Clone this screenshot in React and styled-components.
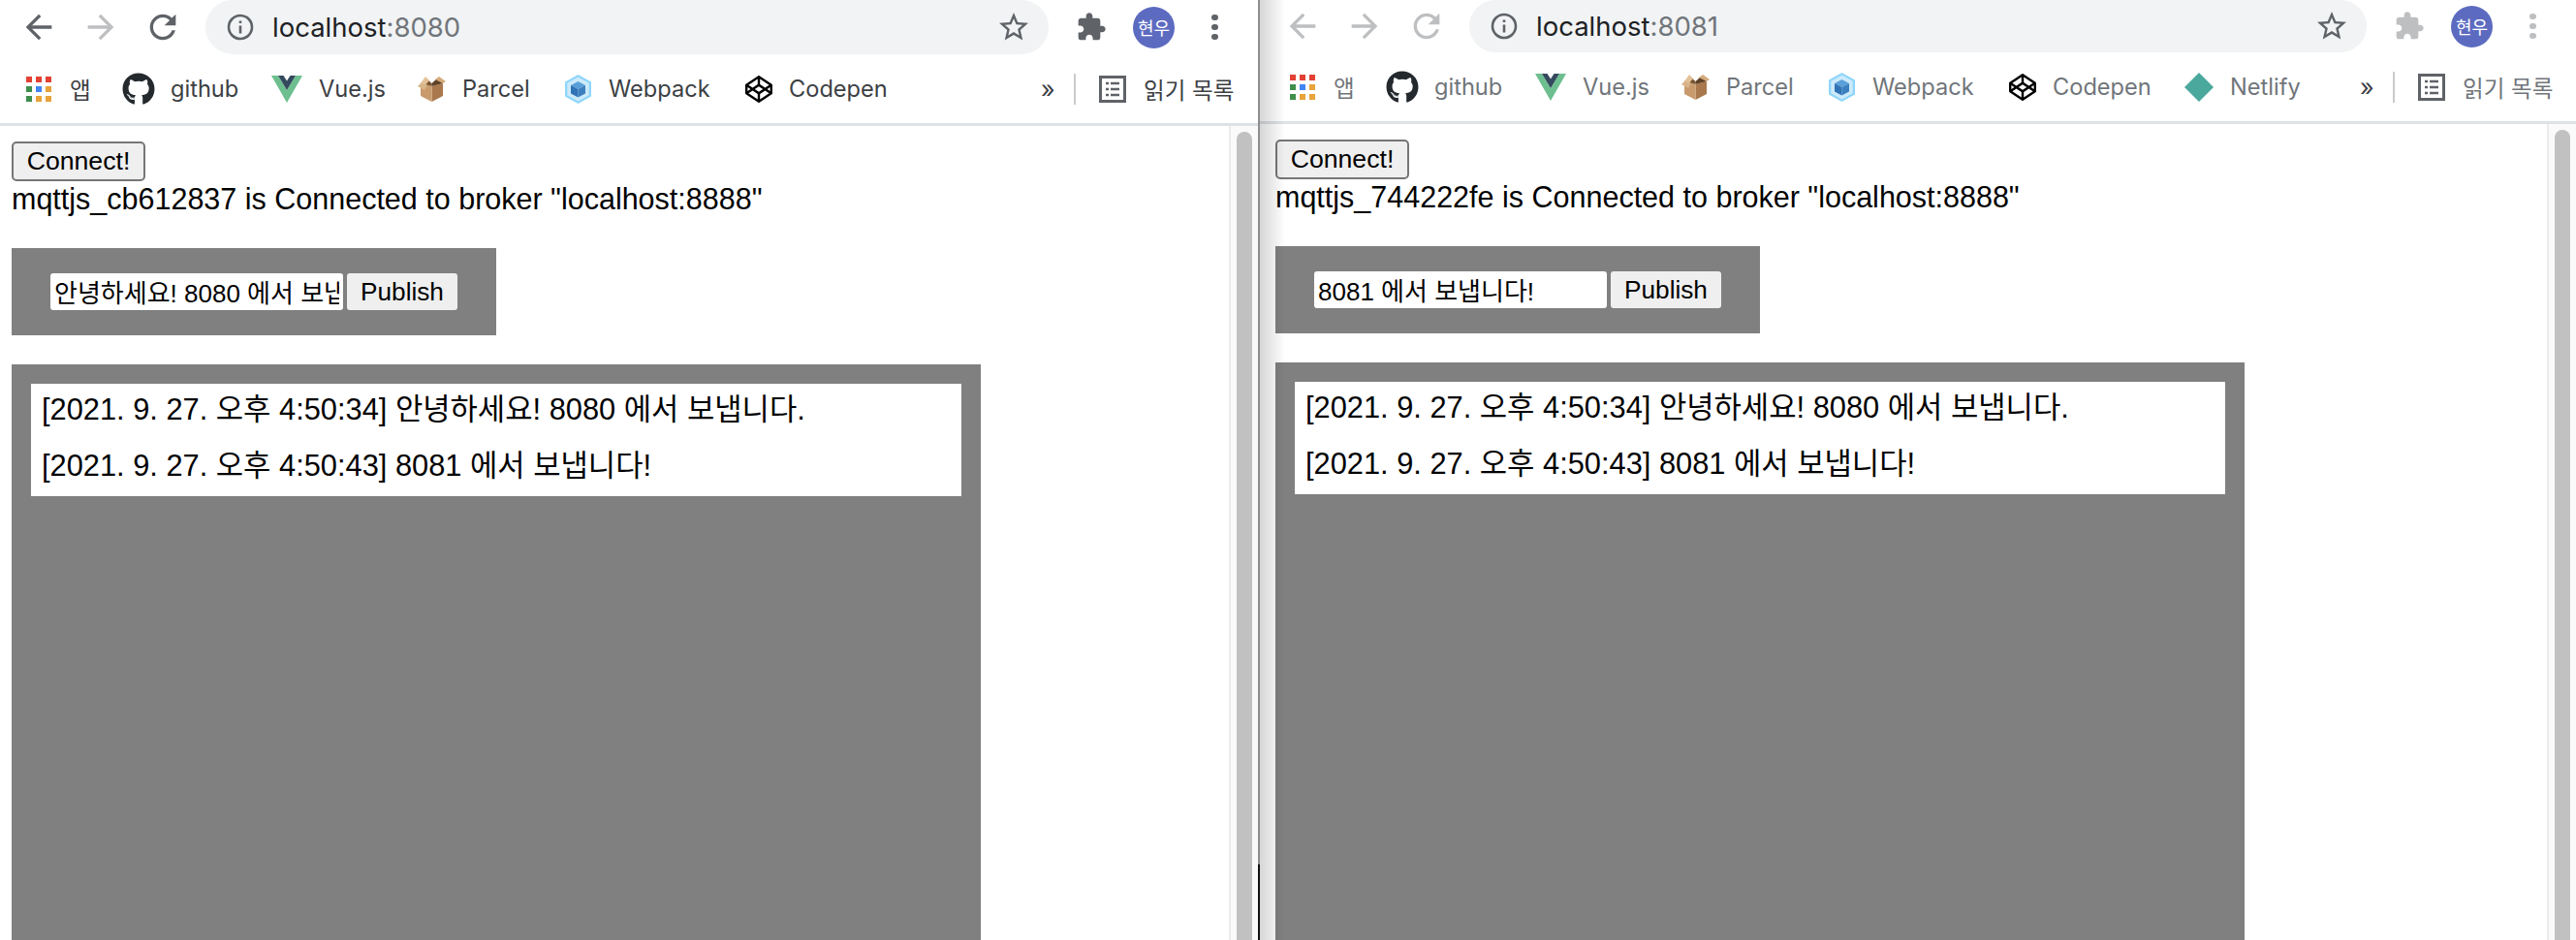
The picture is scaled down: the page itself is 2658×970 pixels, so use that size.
import React from 'react';
import styled, { createGlobalStyle } from 'styled-components';
import { FaGithub, FaCodepen } from 'react-icons/fa';

const GlobalStyle = createGlobalStyle`
  html, body { margin: 0; padding: 0; background: #fff; overflow: hidden; }
  * { box-sizing: border-box; }
`;

const UI_FONT = `Inter, Roboto, "Noto Sans CJK KR", sans-serif`;
const PAGE_FONT = `"Liberation Sans", "Noto Sans CJK KR", sans-serif`;

const Desktop = styled.div`
  display: flex;
  width: 2658px;
  height: 970px;
  overflow: hidden;
  background: #fff;
`;

const Divider = styled.div`
  width: 2px;
  flex: none;
  background: linear-gradient(to bottom, #8e8e8e 0 92%, #111 92%);
`;

const Window = styled.section`
  position: relative;
  display: flex;
  flex-direction: column;
  flex: none;
  width: ${(p) => p.$width}px;
  height: 970px;
  background: #fff;
  ${(p) =>
    p.$shadow &&
    `&::after {
      content: '';
      position: absolute;
      top: 0;
      bottom: 0;
      left: 0;
      width: 26px;
      pointer-events: none;
      background: linear-gradient(to right, rgba(0, 0, 0, 0.16), rgba(0, 0, 0, 0));
    }`}
`;

const Toolbar = styled.div`
  display: flex;
  align-items: center;
  height: ${(p) => p.$height}px;
  flex: none;
`;

const NavIcon = styled.svg`
  flex: none;
  width: ${(p) => p.$size || 40}px;
  height: ${(p) => p.$size || 40}px;
  margin-left: ${(p) => p.$ml || 0}px;
  fill: ${(p) => (p.$off ? '#bdbfc1' : '#5f6368')};
`;

const AddressBar = styled.div`
  display: flex;
  align-items: center;
  width: ${(p) => p.$width}px;
  height: 100%;
  margin-left: ${(p) => p.$ml}px;
  padding: 0 18px 0 22px;
  background: #f1f3f4;
  border-radius: 28px;
  overflow: hidden;
  flex: none;
`;

const InfoIcon = styled.svg`
  flex: none;
  width: 28px;
  height: 28px;
  stroke: #5f6368;
  fill: none;
`;

const Url = styled.div`
  flex: 1;
  margin-left: 19px;
  font: 400 27.5px ${UI_FONT};
  color: #70757a;
  white-space: nowrap;
  span { color: #202124; }
`;

const StarIcon = styled.svg`
  flex: none;
  width: 36px;
  height: 36px;
  fill: #5f6368;
`;

const Avatar = styled.div`
  flex: none;
  display: flex;
  align-items: center;
  justify-content: center;
  width: 43px;
  height: 43px;
  margin-left: 27px;
  border-radius: 50%;
  background: #5c6bc0;
  color: #fff;
  font: 400 18px "Noto Sans CJK KR", sans-serif;
`;

const Dots = styled.div`
  flex: none;
  display: flex;
  flex-direction: column;
  gap: 3.5px;
  margin-left: 38px;
  i {
    width: 6.5px;
    height: 6.5px;
    border-radius: 50%;
    background: ${(p) => (p.$off ? '#bdbfc1' : '#5f6368')};
  }
`;

const BookmarksBar = styled.div`
  display: flex;
  align-items: center;
  height: ${(p) => p.$height}px;
  padding-left: ${(p) => p.$pl}px;
  border-bottom: 3px solid #dee1e6;
  flex: none;
  font: 400 23.6px ${UI_FONT};
  color: ${(p) => (p.$off ? '#70757a' : '#3c4043')};
`;

const Bookmark = styled.div`
  display: flex;
  align-items: center;
  gap: ${(p) => p.$gap || 17}px;
  width: ${(p) => p.$width}px;
  margin-left: ${(p) => p.$ml || 0}px;
  flex: none;
  white-space: nowrap;
`;

const AppsGrid = styled.div`
  display: grid;
  grid-template-columns: repeat(3, 6px);
  grid-auto-rows: 6px;
  gap: 4px;
  flex: none;
`;

const AppsCell = styled.i`
  background: ${(p) => p.$color};
`;

const Chevron = styled.div`
  flex: none;
  width: 34px;
  font: 400 25px ${UI_FONT};
  color: #3c4043;
`;

const Separator = styled.div`
  flex: none;
  width: 2px;
  height: 32px;
  background: #c8cacd;
`;

const Viewport = styled.div`
  flex: 1;
  display: flex;
  min-height: 0;
`;

const Page = styled.main`
  flex: 1;
  min-width: 0;
  padding: ${(p) => p.$pt}px 0 0 ${(p) => p.$pl}px;
  font: 400 30.5px/37px ${PAGE_FONT};
  color: #000;
`;

const ConnectButton = styled.button`
  display: block;
  width: 138px;
  height: 41px;
  padding: 0;
  background: #efefef;
  border: 2px solid #767676;
  border-radius: 5px;
  font: 400 26.67px ${PAGE_FONT};
  color: #000;
`;

const Status = styled.div`
  white-space: nowrap;
`;

const PublishForm = styled.form`
  display: flex;
  gap: 4px;
  width: 500px;
  height: 90px;
  margin-top: 32px;
  padding: 26px 40px;
  background: #808080;
`;

const MessageInput = styled.input`
  width: 302px;
  height: 38px;
  padding: 0 4px 2px;
  background: #fff;
  border: none;
  border-radius: 3px;
  outline: none;
  font: 400 26px ${PAGE_FONT};
  color: #000;
`;

const PublishButton = styled.button`
  width: 114px;
  height: 38px;
  padding: 0;
  background: #efefef;
  border: none;
  border-radius: 3px;
  font: 400 26.2px ${PAGE_FONT};
  color: #000;
`;

const MessagesPanel = styled.div`
  width: 1000px;
  height: 700px;
  margin-top: 30px;
  padding: 20px;
  background: #808080;
`;

const MessageList = styled.ul`
  list-style: none;
  margin: 0;
  padding: 0 11px;
  height: 116px;
  background: #fff;
  font-size: 30.8px;
`;

const MessageItem = styled.li`
  height: 58px;
  padding-bottom: 5px;
  display: flex;
  align-items: center;
  white-space: nowrap;
`;

const ScrollTrack = styled.div`
  flex: none;
  width: 30px;
  padding: ${(p) => p.$pt}px 6px 0 6px;
  background: #fafafa;
  border-left: 2px solid #ebebeb;
`;

const ScrollThumb = styled.div`
  width: 16px;
  height: 1200px;
  background: #c1c1c1;
  border-radius: 8px;
`;

const GITHUB = '#24292e';
const APP_COLORS = ['#e34133', '#e34133', '#e34133', '#3f8f4c', '#4285f4', '#e8a33a', '#3f8f4c', '#e8a33a', '#e8a33a'];

const ArrowBack = (props) => (
  <NavIcon viewBox="0 0 24 24" {...props}>
    <path d="M20 11H7.83l5.59-5.59L12 4l-8 8 8 8 1.41-1.41L7.83 13H20v-2z" />
  </NavIcon>
);

const ArrowForward = (props) => (
  <NavIcon viewBox="0 0 24 24" {...props}>
    <path d="M12 4l-1.41 1.41L16.17 11H4v2h12.17l-5.58 5.59L12 20l8-8z" />
  </NavIcon>
);

const Reload = (props) => (
  <NavIcon viewBox="0 0 24 24" {...props}>
    <path d="M17.65 6.35C16.2 4.9 14.21 4 12 4c-4.42 0-7.99 3.58-7.99 8s3.57 8 7.99 8c3.73 0 6.84-2.55 7.73-6h-2.08c-.82 2.33-3.04 4-5.65 4-3.31 0-6-2.69-6-6s2.69-6 6-6c1.66 0 3.14.69 4.22 1.78L13 11h7V4l-2.35 2.35z" />
  </NavIcon>
);

const Puzzle = (props) => (
  <NavIcon viewBox="0 0 24 24" $size={32} {...props}>
    <path d="M20.5 11H19V7c0-1.1-.9-2-2-2h-4V3.5C13 2.12 11.88 1 10.5 1S8 2.12 8 3.5V5H4c-1.1 0-1.99.9-1.99 2v3.8H3.5c1.49 0 2.7 1.21 2.7 2.7s-1.21 2.7-2.7 2.7H2V20c0 1.1.9 2 2 2h3.8v-1.5c0-1.49 1.21-2.7 2.7-2.7 1.49 0 2.7 1.21 2.7 2.7V22H17c1.1 0 2-.9 2-2v-4h1.5c1.38 0 2.5-1.12 2.5-2.5S21.88 11 20.5 11z" />
  </NavIcon>
);

const Apps = () => (
  <AppsGrid>
    {APP_COLORS.map((c, i) => (
      <AppsCell key={i} $color={c} />
    ))}
  </AppsGrid>
);

const VueLogo = () => (
  <svg width="32" height="28" viewBox="0 0 32 28">
    <polygon points="0,0 7,0 16,15 25,0 32,0 16,28" fill="#6dbf8f" />
    <polygon points="7,0 12.5,0 16,5.5 19.5,0 25,0 16,15" fill="#35495e" />
  </svg>
);

const ParcelLogo = () => (
  <svg width="29" height="26" viewBox="0 0 29 26">
    <polygon points="14.5,10 26,7 26,20 14.5,26" fill="#a9784c" />
    <polygon points="14.5,10 3,7 3,20 14.5,26" fill="#c99b6c" />
    <polygon points="3,7 9,2 14.5,7 14.5,10" fill="#7a5533" />
    <polygon points="26,7 20,2 14.5,7 14.5,10" fill="#5f4127" />
    <polygon points="3,7 8,0 12,4 7,10" fill="#e3c197" />
    <polygon points="26,7 29,5 22,0 18,3" fill="#d3aa7c" />
    <polygon points="3,7 0,10 7,14 10,9" fill="#d8b489" />
  </svg>
);

const WebpackLogo = () => (
  <svg width="27" height="30" viewBox="0 0 27 30">
    <polygon points="13.5,0 27,7.5 27,22.5 13.5,30 0,22.5 0,7.5" fill="#8ed6fb" />
    <polygon points="13.5,2.5 24.7,8.7 24.7,21.3 13.5,27.5 2.3,21.3 2.3,8.7" fill="#cdeafa" />
    <polygon points="13.5,7 21,11 13.5,15 6,11" fill="#5a9fd8" />
    <polygon points="6,11 13.5,15 13.5,23.5 6,19.5" fill="#2f72b5" />
    <polygon points="21,11 13.5,15 13.5,23.5 21,19.5" fill="#3d80c0" />
  </svg>
);

const NetlifyLogo = () => (
  <svg width="30" height="30" viewBox="0 0 30 30">
    <polygon points="15,0 30,15 15,30 0,15" fill="#4aa99c" />
  </svg>
);

const ReadingList = () => (
  <svg width="28" height="28" viewBox="0 0 28 28">
    <rect x="1.5" y="1.5" width="25" height="25" fill="none" stroke="#5f6368" strokeWidth="3" />
    <path d="M7 8h3M12 8h9M7 14h3M12 14h9M7 20h3M12 20h9" stroke="#5f6368" strokeWidth="2.4" />
  </svg>
);

function Browser({ port, clientId, draft, off, width, shadow, toolbarHeight, barHeight, origin, marksLeft, addressLeft, addressWidth, thumbTop, pagePad, netlify }) {
  return (
    <Window $width={width} $shadow={shadow}>
      <Toolbar $height={toolbarHeight}>
        <ArrowBack $ml={origin} $off={off} />
        <ArrowForward $ml={24} $off />
        <Reload $ml={24} $off={off} />
        <AddressBar $ml={addressLeft} $width={addressWidth}>
          <InfoIcon viewBox="0 0 28 28">
            <circle cx="14" cy="14" r="12" strokeWidth="2.6" />
            <path d="M14 12.5v8M14 7.5v2.6" strokeWidth="2.6" />
          </InfoIcon>
          <Url><span>localhost</span>:{port}</Url>
          <StarIcon viewBox="0 0 24 24">
            <path d="M22 9.24l-7.19-.62L12 2 9.19 8.63 2 9.24l5.46 4.73L5.82 21 12 17.27 18.18 21l-1.63-7.03L22 9.24zM12 15.4l-3.76 2.27 1-4.28-3.32-2.88 4.38-.38L12 6.1l1.71 4.04 4.38.38-3.32 2.88 1 4.28L12 15.4z" />
          </StarIcon>
        </AddressBar>
        <Puzzle $ml={28} $off={off} />
        <Avatar>현우</Avatar>
        <Dots $off={off}><i /><i /><i /></Dots>
      </Toolbar>
      <BookmarksBar $height={barHeight} $pl={marksLeft} $off={off}>
        <Bookmark $width={99} $gap={19}><Apps />앱</Bookmark>
        <Bookmark $width={154} $gap={16}><FaGithub size={34} color={GITHUB} />github</Bookmark>
        <Bookmark $width={151}><VueLogo />Vue.js</Bookmark>
        <Bookmark $width={152}><ParcelLogo />Parcel</Bookmark>
        <Bookmark $width={186} $gap={18}><WebpackLogo />Webpack</Bookmark>
        <Bookmark $width={netlify ? 181 : 305}><FaCodepen size={28} color="#000" />Codepen</Bookmark>
        {netlify && <Bookmark $width={181}><NetlifyLogo />Netlify</Bookmark>}
        <Chevron>»</Chevron>
        <Separator />
        <Bookmark $width={150} $gap={18} $ml={24}><ReadingList />읽기 목록</Bookmark>
      </BookmarksBar>
      <Viewport>
        <Page $pt={pagePad.top} $pl={pagePad.left}>
          <ConnectButton type="button">Connect!</ConnectButton>
          <Status>{clientId} is Connected to broker "localhost:8888"</Status>
          <PublishForm onSubmit={(e) => e.preventDefault()}>
            <MessageInput defaultValue={draft} />
            <PublishButton type="button">Publish</PublishButton>
          </PublishForm>
          <MessagesPanel>
            <MessageList>
              <MessageItem>[2021. 9. 27. 오후 4:50:34] 안녕하세요! 8080 에서 보냅니다.</MessageItem>
              <MessageItem>[2021. 9. 27. 오후 4:50:43] 8081 에서 보냅니다!</MessageItem>
            </MessageList>
          </MessagesPanel>
        </Page>
        <ScrollTrack $pt={thumbTop}>
          <ScrollThumb />
        </ScrollTrack>
      </Viewport>
    </Window>
  );
}

export default function App() {
  return (
    <Desktop>
      <GlobalStyle />
      <Browser
        port="8080"
        clientId="mqttjs_cb612837"
        draft="안녕하세요! 8080 에서 보냅니다."
        width={1298}
        toolbarHeight={56}
        barHeight={74}
        origin={20}
        addressLeft={24}
        addressWidth={870}
        marksLeft={27}
        thumbTop={6}
        pagePad={{ top: 16, left: 12 }}
      />
      <Divider />
      <Browser
        port="8081"
        clientId="mqttjs_744222fe"
        draft="8081 에서 보냅니다!"
        off
        shadow
        netlify
        width={1358}
        toolbarHeight={54}
        barHeight={74}
        origin={24}
        addressLeft={24}
        addressWidth={926}
        marksLeft={31}
        thumbTop={6}
        pagePad={{ top: 16, left: 16 }}
      />
    </Desktop>
  );
}
